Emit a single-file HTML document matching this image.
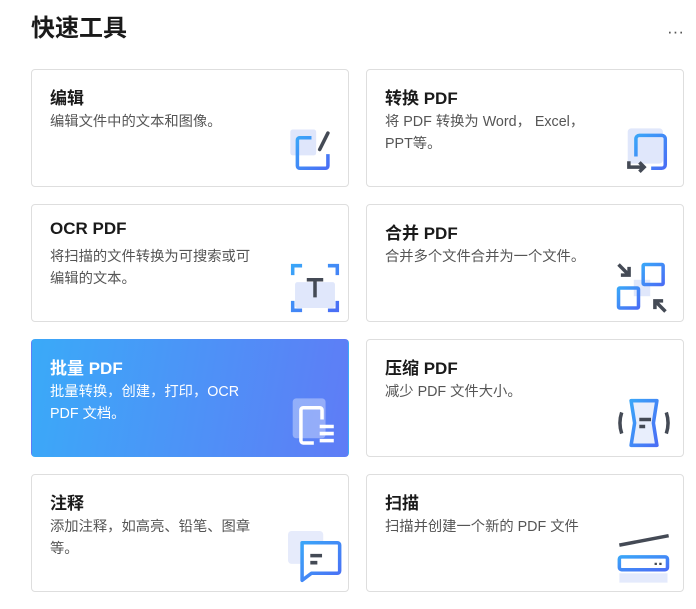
<!DOCTYPE html>
<html><head><meta charset="utf-8"><style>
body{margin:0;width:696px;height:609px;background:#fff;font-family:"Liberation Sans","Noto Sans CJK SC",sans-serif;position:relative;overflow:hidden}
h1{position:absolute;left:31px;top:8px;margin:0;font-size:24px;font-weight:bold;color:#1a1a1a}
.dots{position:absolute;left:667px;top:22px;font-size:17px;color:#555;letter-spacing:0px}
.card{position:absolute;width:316px;height:116px;border:1px solid #dedede;border-radius:4px;box-sizing:content-box}
.card .t{position:absolute;left:18px;top:14px;font-size:17px;font-weight:bold;color:#1a1a1a}
.card .d{position:absolute;left:18px;top:41px;width:214px;font-size:14.3px;line-height:22px;color:#555}
.card svg{position:absolute;right:6px;bottom:6px}
.hi{background:linear-gradient(100deg,#3aaaf8,#5f7cf6);border-color:transparent}
.hi .t,.hi .d{color:#fff}
</style></head><body>
<h1>快速工具</h1><div class="dots">···</div>

<div class="card" style="left:31px;top:69px"><div class="t">编辑</div><div class="d">编辑文件中的文本和图像。</div>
<svg width="54" height="54" viewBox="0 0 46 46"><defs><linearGradient id="g" x1="0" y1="0" x2="1" y2="1"><stop offset="0" stop-color="#3aa5f8"/><stop offset="1" stop-color="#4a6ef5"/></linearGradient></defs>
<rect x="2" y="3" width="22" height="22" rx="2" fill="#dfe6fb"/><path d="M20 10H10a2 2 0 0 0-2 2v22a2 2 0 0 0 2 2h22a2 2 0 0 0 2-2V24" fill="none" stroke="url(#g)" stroke-width="3"/><path d="M27 20L34 6" stroke="#444a55" stroke-width="3" stroke-linecap="round"/></svg></div>

<div class="card" style="left:366px;top:69px"><div class="t">转换 PDF</div><div class="d" style="width:220px">将 PDF 转换为 Word，  Excel，PPT等。</div>
<svg width="54" height="54" viewBox="0 0 46 46"><rect x="4" y="2" width="30" height="30" rx="3" fill="#e0e7fb"/><path d="M11 26V11a3 3 0 0 1 3-3h19a3 3 0 0 1 3 3v22a3 3 0 0 1-3 3H24" fill="none" stroke="url(#g)" stroke-width="3"/><path d="M5 30v5h12M14 31l4 4-4 4" fill="none" stroke="#444a55" stroke-width="3"/></svg></div>

<div class="card" style="left:31px;top:204px"><div class="t">OCR PDF</div><div class="d">将扫描的文件转换为可搜索或可编辑的文本。</div>
<svg width="54" height="54" viewBox="0 0 46 46"><rect x="6" y="18" width="34" height="22" rx="2" fill="#e0e7fb"/><path d="M4 12V4h8M34 4h8v8M42 34v8h-8M12 42H4v-8" fill="none" stroke="url(#g)" stroke-width="3"/><path d="M16 16h14M23 16v15" stroke="#444a55" stroke-width="3"/></svg></div>

<div class="card" style="left:366px;top:204px"><div class="t">合并 PDF</div><div class="d" style="width:230px">合并多个文件合并为一个文件。</div>
<svg width="54" height="54" viewBox="0 0 46 46" style="right:14px"><rect x="16" y="16" width="14" height="14" fill="#e0e7fb"/><rect x="24" y="3" width="17" height="17" rx="1" fill="none" stroke="url(#g)" stroke-width="3"/><rect x="3" y="23" width="17" height="17" rx="1" fill="none" stroke="url(#g)" stroke-width="3"/><path d="M3 3l9 9M12 5v7H5M43 43l-9-9M34 41v-7h7" fill="none" stroke="#444a55" stroke-width="3"/></svg></div>

<div class="card hi" style="left:31px;top:339px"><div class="t">批量 PDF</div><div class="d">批量转换，创建，打印，OCR PDF 文档。</div>
<svg width="54" height="54" viewBox="0 0 46 46"><rect x="4" y="2" width="28" height="34" rx="3" fill="#fff" opacity=".35"/><path d="M22 40H13a2 2 0 0 1-2-2V12a2 2 0 0 1 2-2h14a2 2 0 0 1 2 2v8" fill="none" stroke="#fff" stroke-width="3"/><path d="M27 26h12M27 32h12M27 38h12" stroke="#fff" stroke-width="3"/></svg></div>

<div class="card" style="left:366px;top:339px"><div class="t">压缩 PDF</div><div class="d">减少 PDF 文件大小。</div>
<svg width="54" height="54" viewBox="0 0 46 46" style="right:12px"><path d="M12 4h22l-3 19 3 19H12l3-19z" fill="#e8eefc" stroke="url(#g)" stroke-width="3" stroke-linejoin="round"/><path d="M4 14q-3 9 0 18M42 14q3 9 0 18" fill="none" stroke="#444a55" stroke-width="3"/><path d="M19 20h10M19 26h5" stroke="#444a55" stroke-width="3"/></svg></div>

<div class="card" style="left:31px;top:474px"><div class="t">注释</div><div class="d">添加注释，如高亮、铅笔、图章等。</div>
<svg width="54" height="54" viewBox="0 0 46 46"><rect x="0" y="0" width="30" height="28" rx="3" fill="#e6ebfb"/><path d="M12 10h30a2 2 0 0 1 2 2v22a2 2 0 0 1-2 2H20l-8 6z" fill="#fff" stroke="url(#g)" stroke-width="3" stroke-linejoin="round"/><path d="M19 21h10M19 27h6" stroke="#444a55" stroke-width="3"/></svg></div>

<div class="card" style="left:366px;top:474px"><div class="t">扫描</div><div class="d" style="width:240px">扫描并创建一个新的 PDF 文件</div>
<svg width="54" height="54" viewBox="0 0 46 46" style="right:12px"><path d="M2 12L44 4" stroke="#444a55" stroke-width="3"/><rect x="2" y="22" width="41" height="11" rx="2" fill="#fff" stroke="url(#g)" stroke-width="3"/><path d="M32 28h2M36 28h2" stroke="#444a55" stroke-width="2"/><rect x="2" y="36" width="41" height="8" fill="#e4eafc"/></svg></div>
</body></html>
